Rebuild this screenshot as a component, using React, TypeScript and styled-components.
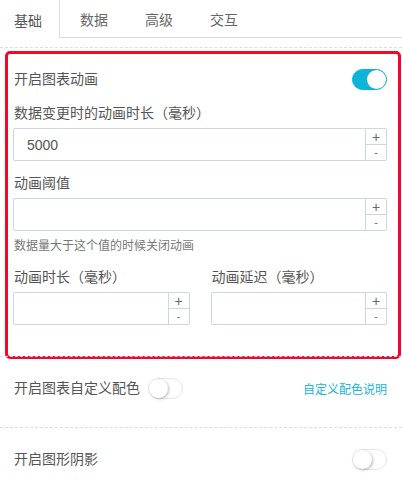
import styled, { createGlobalStyle } from 'styled-components'

const GlobalStyle = createGlobalStyle`
    body {
        margin: 0;
        background: #fff;
        font-family: "Liberation Sans", "Noto Sans CJK SC", sans-serif;
        color: #555;
    }
`

const Page = styled.div`
    width: 402px;
`

// 상단 탭
const TabBar = styled.div`
    display: flex;
    align-items: flex-start;
    height: 37px;
    border-bottom: 1px solid #ddd;
    margin-bottom: 9px;
`

const Tab = styled.div<{ active?: boolean; first?: boolean }>`
    display: flex;
    align-items: center;
    height: ${props => props.active ? 38 : 37}px;
    box-sizing: border-box;
    padding: 1px 17px 0 ${props => props.first ? 14 : 20}px;
    font-size: 14px;
    color: ${props => props.active ? '#555' : '#666'};
    background: ${props => props.active ? '#fff' : 'transparent'};
    border-right: ${props => props.active ? '1px solid #ddd' : 'none'};
    position: relative;
`

const Section = styled.div<{ pb?: number }>`
    position: relative;
    border-top: 1px dashed #ddd;
    padding: 21px 15px ${props => props.pb ?? 29}px 13px;
`

// 빨간 강조 박스
const Highlight = styled.div`
    position: absolute;
    top: 3px;
    left: 5px;
    right: 1px;
    bottom: -3px;
    border: 3px solid #f7052a;
    border-radius: 5px;
    pointer-events: none;
`

const Row = styled.div`
    display: flex;
    align-items: center;
    justify-content: space-between;
    height: 20px;
    padding-left: 1px;
`

const RowLeft = styled.div`
    display: flex;
    align-items: center;
    gap: 8px;
`

const Text = styled.span`
    font-size: 14px;
    line-height: 20px;
    color: #555;
`

const Link = styled.span`
    font-size: 12px;
    color: #21b4d6;
`

const Switch = styled.div<{ on?: boolean }>`
    position: relative;
    width: 35px;
    height: 21px;
    box-sizing: border-box;
    border-radius: 11px;
    background: ${props => props.on ? '#0db4d9' : '#fff'};
    border: 1px solid ${props => props.on ? '#0db4d9' : '#e6e6e6'};
    &::after {
        content: '';
        position: absolute;
        top: 0;
        left: ${props => props.on ? 14 : 0}px;
        width: 19px;
        height: 19px;
        border-radius: 50%;
        background: #fff;
        box-shadow: ${props => props.on ? '0 0 1px rgba(0,0,0,.1)' : '1px 1px 3px rgba(0,0,0,.28)'};
    }
`

const Field = styled.div<{ mt?: number }>`
    display: flex;
    flex-direction: column;
    margin-top: ${props => props.mt ?? 0}px;
`

const Label = styled.label`
    font-size: 14px;
    line-height: 20px;
    color: #555;
    padding-left: 1px;
    margin-bottom: 5px;
`

const Help = styled.div`
    font-size: 12px;
    line-height: 18px;
    color: #777;
    margin-top: 6px;
    padding-left: 1px;
`

const Cols = styled.div`
    display: grid;
    grid-template-columns: 1fr 1fr;
    column-gap: 21px;
    margin-top: 12px;
`

const InputBox = styled.div`
    display: flex;
    height: 33px;
    box-sizing: border-box;
    border: 1px solid #cbd8dc;
    border-radius: 2px;
`

const InputText = styled.div`
    flex: 1;
    display: flex;
    align-items: center;
    padding-left: 13px;
    font-size: 14px;
    color: #555;
`

const Stepper = styled.div`
    display: flex;
    flex-direction: column;
    width: 20px;
    border-left: 1px solid #cbd8dc;
`

const StepBtn = styled.div<{ top?: boolean }>`
    flex: 1;
    display: flex;
    align-items: center;
    justify-content: center;
    font-size: ${props => props.top ? 14 : 11}px;
    line-height: 1;
    color: #666;
    border-bottom: ${props => props.top ? '1px solid #cbd8dc' : 'none'};
`

const NumberInput = ({ value }: { value?: string }) => (
    <InputBox>
        <InputText>{value}</InputText>
        <Stepper>
            <StepBtn top>+</StepBtn>
            <StepBtn>-</StepBtn>
        </Stepper>
    </InputBox>
)

const App = () => {
    const tabs = ['基础', '数据', '高级', '交互']
    return (
        <Page>
            <GlobalStyle />
            <TabBar>
                {tabs.map((t, i) => (
                    <Tab key={t} active={i === 0} first={i === 0}>{t}</Tab>
                ))}
            </TabBar>

            <Section pb={31}>
                <Row>
                    <Text>开启图表动画</Text>
                    <Switch on />
                </Row>
                <Field mt={14}>
                    <Label>数据变更时的动画时长（毫秒）</Label>
                    <NumberInput value="5000" />
                </Field>
                <Field mt={12}>
                    <Label>动画阈值</Label>
                    <NumberInput />
                    <Help>数据量大于这个值的时候关闭动画</Help>
                </Field>
                <Cols>
                    <Field>
                        <Label>动画时长（毫秒）</Label>
                        <NumberInput />
                    </Field>
                    <Field>
                        <Label>动画延迟（毫秒）</Label>
                        <NumberInput />
                    </Field>
                </Cols>
                <Highlight />
            </Section>

            <Section>
                <Row>
                    <RowLeft>
                        <Text>开启图表自定义配色</Text>
                        <Switch />
                    </RowLeft>
                    <Link>自定义配色说明</Link>
                </Row>
            </Section>

            <Section>
                <Row>
                    <Text>开启图形阴影</Text>
                    <Switch />
                </Row>
            </Section>
        </Page>
    )
}

export default App
